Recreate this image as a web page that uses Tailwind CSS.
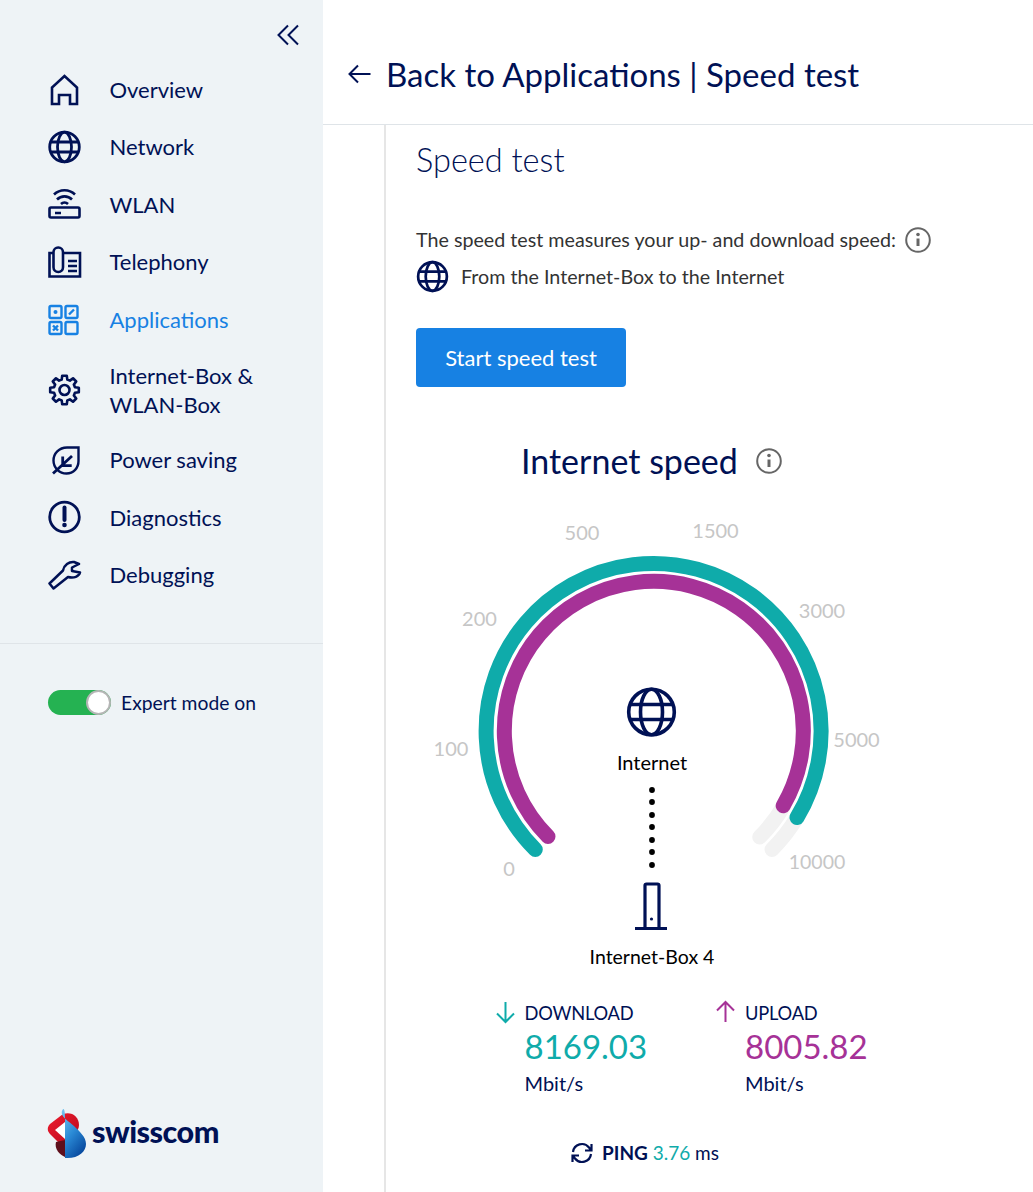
<!DOCTYPE html>
<html lang="en">
<head>
    <meta charset="UTF-8">
    <title>Speed test</title>
    <script src="https://cdn.jsdelivr.net/npm/@tailwindcss/browser@4"></script>
</head>
<body class="font-['Lato',sans-serif] text-[#001155] bg-white">
    <div class="flex h-[1192px] w-[1033px] overflow-hidden">
        <!-- Sidebar -->
        <aside class="w-[323px] shrink-0 bg-[#eef3f6] flex flex-col relative">
            <div class="h-[61px] pr-[24px] pt-[24px] flex justify-end items-start">
                <svg class="w-[22px] h-[22px]" viewBox="0 0 22 22" fill="none" stroke="#001155" stroke-width="2"><path d="M11 1.500 1.500 11 11 20.500M21 1.500 11.500 11 21 20.500"/></svg>
            </div>
            <nav class="flex flex-col pl-[48px] text-[22px] leading-[29px]">
                <a class="h-[57.5px] flex items-center gap-[27.5px]">
                    <svg class="w-[34px] h-[34px] shrink-0" viewBox="0 0 34 34" fill="none" stroke="currentColor" stroke-width="2.600"><path d="M4 31V14.500L16.500 3 29 14.500V31H22V22H11V31Z"/></svg>
                    <span class="-mt-[1px]">Overview</span>
                </a>
                <a class="h-[57.5px] flex items-center gap-[27.5px]">
                    <svg class="w-[34px] h-[34px] shrink-0" viewBox="0 0 34 34" fill="none" stroke="currentColor" stroke-width="2.800"><circle cx="16.500" cy="17" r="14.800"/><ellipse cx="16.500" cy="17" rx="7" ry="14.800"/><path d="M3 12H30M3 22H30"/></svg>
                    <span class="-mt-[1px]">Network</span>
                </a>
                <a class="h-[57.5px] flex items-center gap-[27.5px]">
                    <svg class="w-[34px] h-[34px] shrink-0" viewBox="0 0 34 34" fill="none" stroke="currentColor" stroke-width="2.600"><rect x="1.500" y="19.500" width="30" height="10" rx="1.500"/><path d="M7 25H13M13 16a5 5 0 0 1 7 0M9 11.500a10.500 10.500 0 0 1 15 0M6 6.500a15 15 0 0 1 21 0"/></svg>
                    <span class="-mt-[1px]">WLAN</span>
                </a>
                <a class="h-[57.5px] flex items-center gap-[27.5px]">
                    <svg class="w-[34px] h-[34px] shrink-0" viewBox="0 0 34 34" fill="none" stroke="currentColor" stroke-width="2.600"><path d="M5 8H1.500V31.500H32V8H15"/><rect x="5.500" y="2.500" width="9.500" height="24.500" rx="4.700"/><path d="M20 16H29M20 21H29M20 26H29"/></svg>
                    <span class="-mt-[1px]">Telephony</span>
                </a>
                <a class="h-[57.5px] flex items-center gap-[27.5px] text-[#1781e3]">
                    <svg class="w-[34px] h-[34px] shrink-0" viewBox="0 0 34 34" fill="none" stroke="currentColor" stroke-width="2.400"><rect x="1.500" y="3" width="12" height="12" rx="1.500"/><rect x="17.500" y="3" width="12" height="12" rx="1.500"/><rect x="1.500" y="19" width="12" height="12" rx="1.500"/><rect x="17.500" y="19" width="12" height="12" rx="1.500"/><circle cx="7.500" cy="9" r="2" fill="currentColor" stroke="none"/><path d="M21 11.500 26 6.500M5 22.500 10 27.500M10 22.500 5 27.500"/></svg>
                    <span class="-mt-[1px]">Applications</span>
                </a>
                <a class="h-[82.5px] flex items-center gap-[27.5px]">
                    <svg class="w-[34px] h-[34px] shrink-0" viewBox="-16.500 -17 34 34" fill="none" stroke="currentColor" stroke-width="2.600" stroke-linejoin="round"><path d="M-2.800-10.430-2.270-14.320 2.270-14.320 2.800-10.430 5.400-9.350 8.520-11.730 11.730-8.520 9.350-5.400 10.430-2.800 14.320-2.270 14.320 2.270 10.430 2.800 9.350 5.400 11.730 8.520 8.520 11.730 5.400 9.350 2.800 10.430 2.270 14.320-2.270 14.320-2.800 10.430-5.400 9.350-8.520 11.730-11.730 8.520-9.350 5.400-10.430 2.800-14.320 2.270-14.320-2.270-10.430-2.800-9.350-5.400-11.730-8.520-8.520-11.730-5.400-9.350Z"/><circle r="5"/></svg>
                    <span>Internet-Box &amp;<br>WLAN-Box</span>
                </a>
                <a class="h-[57.5px] flex items-center gap-[27.5px]">
                    <svg class="w-[34px] h-[34px] shrink-0" viewBox="0 0 34 34" fill="none" stroke="currentColor" stroke-width="2.400"><path d="M30.500 4.500H19C11 4.500 5.500 10.500 5.500 17.500 5.500 25 11.500 30.500 18.500 30.500 25.500 30.500 30.500 25 30.500 18Z"/><path d="M5 30.500 24 13M14.700 13.500V22.700H23.700" stroke-width="2.800"/></svg>
                    Power saving
                </a>
                <a class="h-[57.5px] flex items-center gap-[27.5px]">
                    <svg class="w-[34px] h-[34px] shrink-0" viewBox="0 0 34 34" fill="none" stroke="currentColor" stroke-width="2.800"><circle cx="16.500" cy="17" r="14.800"/><path d="M16.500 7.500V20" stroke-width="4" stroke-linecap="round"/><circle cx="16.500" cy="25" r="2.300" fill="currentColor" stroke="none"/></svg>
                    Diagnostics
                </a>
                <a class="h-[57.5px] flex items-center gap-[27.5px]">
                    <svg class="w-[34px] h-[34px] shrink-0" viewBox="0 0 34 34" fill="none" stroke="currentColor" stroke-width="2.500" stroke-linejoin="round"><path d="M1.500 25.500 15 12.500C16 7 21 3.500 26 4L31 6 24 9.500V13L32 14.500C31 18.500 26 20.500 20 19L5.500 30.500Z"/></svg>
                    Debugging
                </a>
            </nav>
            <div class="mt-[39px] border-t border-[#dfe4e8]"></div>
            <div class="mt-[45px] pl-[48px] flex items-center gap-[10px] text-[19.300px]">
                <div class="w-[63px] h-[25px] rounded-full bg-[#25b252] flex justify-end">
                    <div class="w-[25px] h-[25px] rounded-full bg-white border-2 border-[#b5b5b5]"></div>
                </div>
                <span>Expert mode on</span>
            </div>
            <div class="mt-auto mb-[34px] pl-[47px] flex items-center gap-[3px]">
                <svg class="w-[42px] h-[54px] translate-y-[3px]" viewBox="47 1108 42 54">
                    <defs>
                        <linearGradient id="redLobe" x1="0" y1="0" x2="1" y2="1"><stop offset="0" stop-color="#ee1c2e"/><stop offset="1" stop-color="#b80a1e"/></linearGradient>
                        <linearGradient id="blueLobe" x1="0" y1="0" x2="0.600" y2="1"><stop offset="0" stop-color="#7cc8f0"/><stop offset="0.550" stop-color="#2a8ad6"/><stop offset="1" stop-color="#0a4da2"/></linearGradient>
                    </defs>
                    <path d="M63 1115C71 1112 79 1117 79 1126 79 1130 77 1132 74 1135L60 1145 50 1135C47 1132 47 1128 50 1125Z" fill="url(#redLobe)"/>
                    <path d="M65 1123 55 1131 65 1140Z" fill="#fff"/>
                    <path d="M65 1141 56 1143C54 1150 60 1156 65 1158Z" fill="#5e0f1c"/>
                    <path d="M62 1112C64 1107 65 1112 65 1118V1159C78 1160 86 1153 86 1145 86 1138 80 1133 74 1127 69 1122 60 1118 62 1112Z" fill="url(#blueLobe)"/>
                </svg>
                <span class="text-[30.500px] font-black leading-none tracking-[-0.500px]">swisscom</span>
            </div>
        </aside>

        <!-- Main -->
        <main class="flex-1 flex flex-col min-w-0">
            <header class="h-[125px] shrink-0 border-b border-[#dfe4e8] flex items-center pl-[25px] pt-[24px] gap-[15px] text-[33px]">
                <svg class="w-[23px] h-[20px]" viewBox="0 0 23 20" fill="none" stroke="currentColor" stroke-width="2"><path d="M22.500 10H1.500M10 1.500 1.500 10 10 18.500"/></svg>
                <span class="mt-[2px]">Back to Applications | Speed test</span>
            </header>
            <section class="flex-1 ml-[61px] border-l-2 border-[#e6e6e6] pl-[30px] overflow-hidden">
                <h1 class="mt-[13px] text-[32.500px] leading-[44px] font-light">Speed test</h1>
                <div class="mt-[43px] flex items-center gap-[9px] text-[19.700px] leading-[30px] text-[#333]">
                    The speed test measures your up- and download speed:
                    <svg class="w-[26px] h-[26px]" viewBox="0 0 26 26" fill="none" stroke="#666" stroke-width="2"><circle cx="13" cy="13" r="11.800"/><path d="M13 11.500V19" stroke-width="3"/><circle cx="13" cy="7.500" r="1.800" fill="#666" stroke="none"/></svg>
                </div>
                <div class="mt-[5px] flex items-center gap-[12px] text-[19.700px] leading-[30px] text-[#333]">
                    <svg class="w-[33px] h-[33px]" viewBox="0 0 34 34" fill="none" stroke="#001155" stroke-width="2.800"><circle cx="17" cy="17" r="14.800"/><ellipse cx="17" cy="17" rx="7" ry="14.800"/><path d="M3 12H31M3 22H31"/></svg>
                    From the Internet-Box to the Internet
                </div>
                <button class="mt-[35px] w-[210px] h-[59px] rounded-[4px] bg-[#1781e3] text-white text-[22px]">Start speed test</button>
                <div class="mt-[52px] ml-[105px] flex items-center gap-[18px] text-[34px] leading-[44px]">
                    Internet speed
                    <svg class="w-[26px] h-[26px]" viewBox="0 0 26 26" fill="none" stroke="#666" stroke-width="2"><circle cx="13" cy="13" r="11.800"/><path d="M13 11.500V19" stroke-width="3"/><circle cx="13" cy="7.500" r="1.800" fill="#666" stroke="none"/></svg>
                </div>
                <!-- Gauge: drawn in page coordinates -->
                <svg class="mt-[27px] block" width="480" height="470" viewBox="416 510 480 470" fill="none">
                    <g stroke-width="15" stroke-linecap="round">
                        <path d="M797 817.500A167.500 167.500 0 0 1 772 849.500" stroke="#f2f2f2"/>
                        <path d="M783.600 806A149.500 149.500 0 0 1 759.700 837" stroke="#f2f2f2"/>
                        <path d="M535.300 849.500A167.500 167.500 0 1 1 797 817.500" stroke="#0fabaa"/>
                        <path d="M548 836.500A149.500 149.500 0 1 1 783.200 805.800" stroke="#a63297"/>
                    </g>
                    <g fill="#c6c6c6" font-size="20" text-anchor="middle">
                        <text x="509" y="876">0</text>
                        <text x="451" y="756">100</text>
                        <text x="479.500" y="626">200</text>
                        <text x="582" y="540">500</text>
                        <text x="715.500" y="538">1500</text>
                        <text x="822" y="618">3000</text>
                        <text x="856.500" y="747">5000</text>
                        <text x="817" y="869" font-size="19.500">10000</text>
                    </g>
                    <g stroke="#001155" stroke-width="3.600">
                        <circle cx="651.500" cy="712" r="22.800"/>
                        <ellipse cx="651.500" cy="712" rx="11" ry="22.800"/>
                        <path d="M631 704.500H672M631 719.500H672"/>
                        <path d="M645 928V885.500Q645 884 646.500 884H657.500Q659 884 659 885.500V928M635 928.500H667" stroke-width="3.200"/>
                    </g>
                    <circle cx="651.500" cy="919" r="1.600" fill="#001155"/>
                    <g fill="#000">
                        <circle cx="652" cy="790" r="2.900"/>
                        <circle cx="652" cy="802" r="2.900"/>
                        <circle cx="652" cy="815" r="2.900"/>
                        <circle cx="652" cy="827" r="2.900"/>
                        <circle cx="652" cy="840" r="2.900"/>
                        <circle cx="652" cy="852" r="2.900"/>
                        <circle cx="652" cy="865" r="2.900"/>
                    </g>
                    <g fill="#000" text-anchor="middle">
                        <text x="652" y="770" font-size="20">Internet</text>
                        <text x="652" y="964" font-size="19.500">Internet-Box 4</text>
                    </g>
                </svg>
                <div class="mt-[19px] ml-[79px] flex text-[20px] leading-[28px]">
                    <div class="w-[220px] flex gap-[8.500px]">
                        <svg class="w-[21px] h-[24px] mt-[1px]" viewBox="0 0 21 24" fill="none" stroke="#0fabaa" stroke-width="2"><path d="M10.500 2V22M2 13.500 10.500 22 19 13.500"/></svg>
                        <div>
                            <div class="text-[18.300px] tracking-[-0.200px]">DOWNLOAD</div>
                            <div class="text-[33px] leading-[40px] -mt-[1px] text-[#0fabaa]">8169.03</div>
                            <div class="mt-[3px]">Mbit/s</div>
                        </div>
                    </div>
                    <div class="flex gap-[9px]">
                        <svg class="w-[21px] h-[24px] mt-[1px]" viewBox="0 0 21 24" fill="none" stroke="#a63297" stroke-width="2"><path d="M10.500 22V2M2 10.500 10.500 2 19 10.500"/></svg>
                        <div>
                            <div class="text-[18.300px] tracking-[-0.200px]">UPLOAD</div>
                            <div class="text-[33px] leading-[40px] -mt-[1px] text-[#a63297]">8005.82</div>
                            <div class="mt-[3px]">Mbit/s</div>
                        </div>
                    </div>
                </div>
                <div class="mt-[42px] ml-[155px] flex items-center gap-[9px] text-[19px] leading-[28px]">
                    <svg class="w-[22px] h-[22px]" viewBox="0 0 22 22" fill="none" stroke="currentColor" stroke-width="2.200"><path d="M2 10A9 9 0 0 1 18 5.500L20 8M20.500 2V8.500H14M20 12A9 9 0 0 1 4 16.500L2 14M1.500 20V13.500H8"/></svg>
                    <span><b class="font-bold">PING</b> <span class="text-[#0fabaa]">3.76</span> ms</span>
                </div>
            </section>
        </main>
    </div>
</body>
</html>
